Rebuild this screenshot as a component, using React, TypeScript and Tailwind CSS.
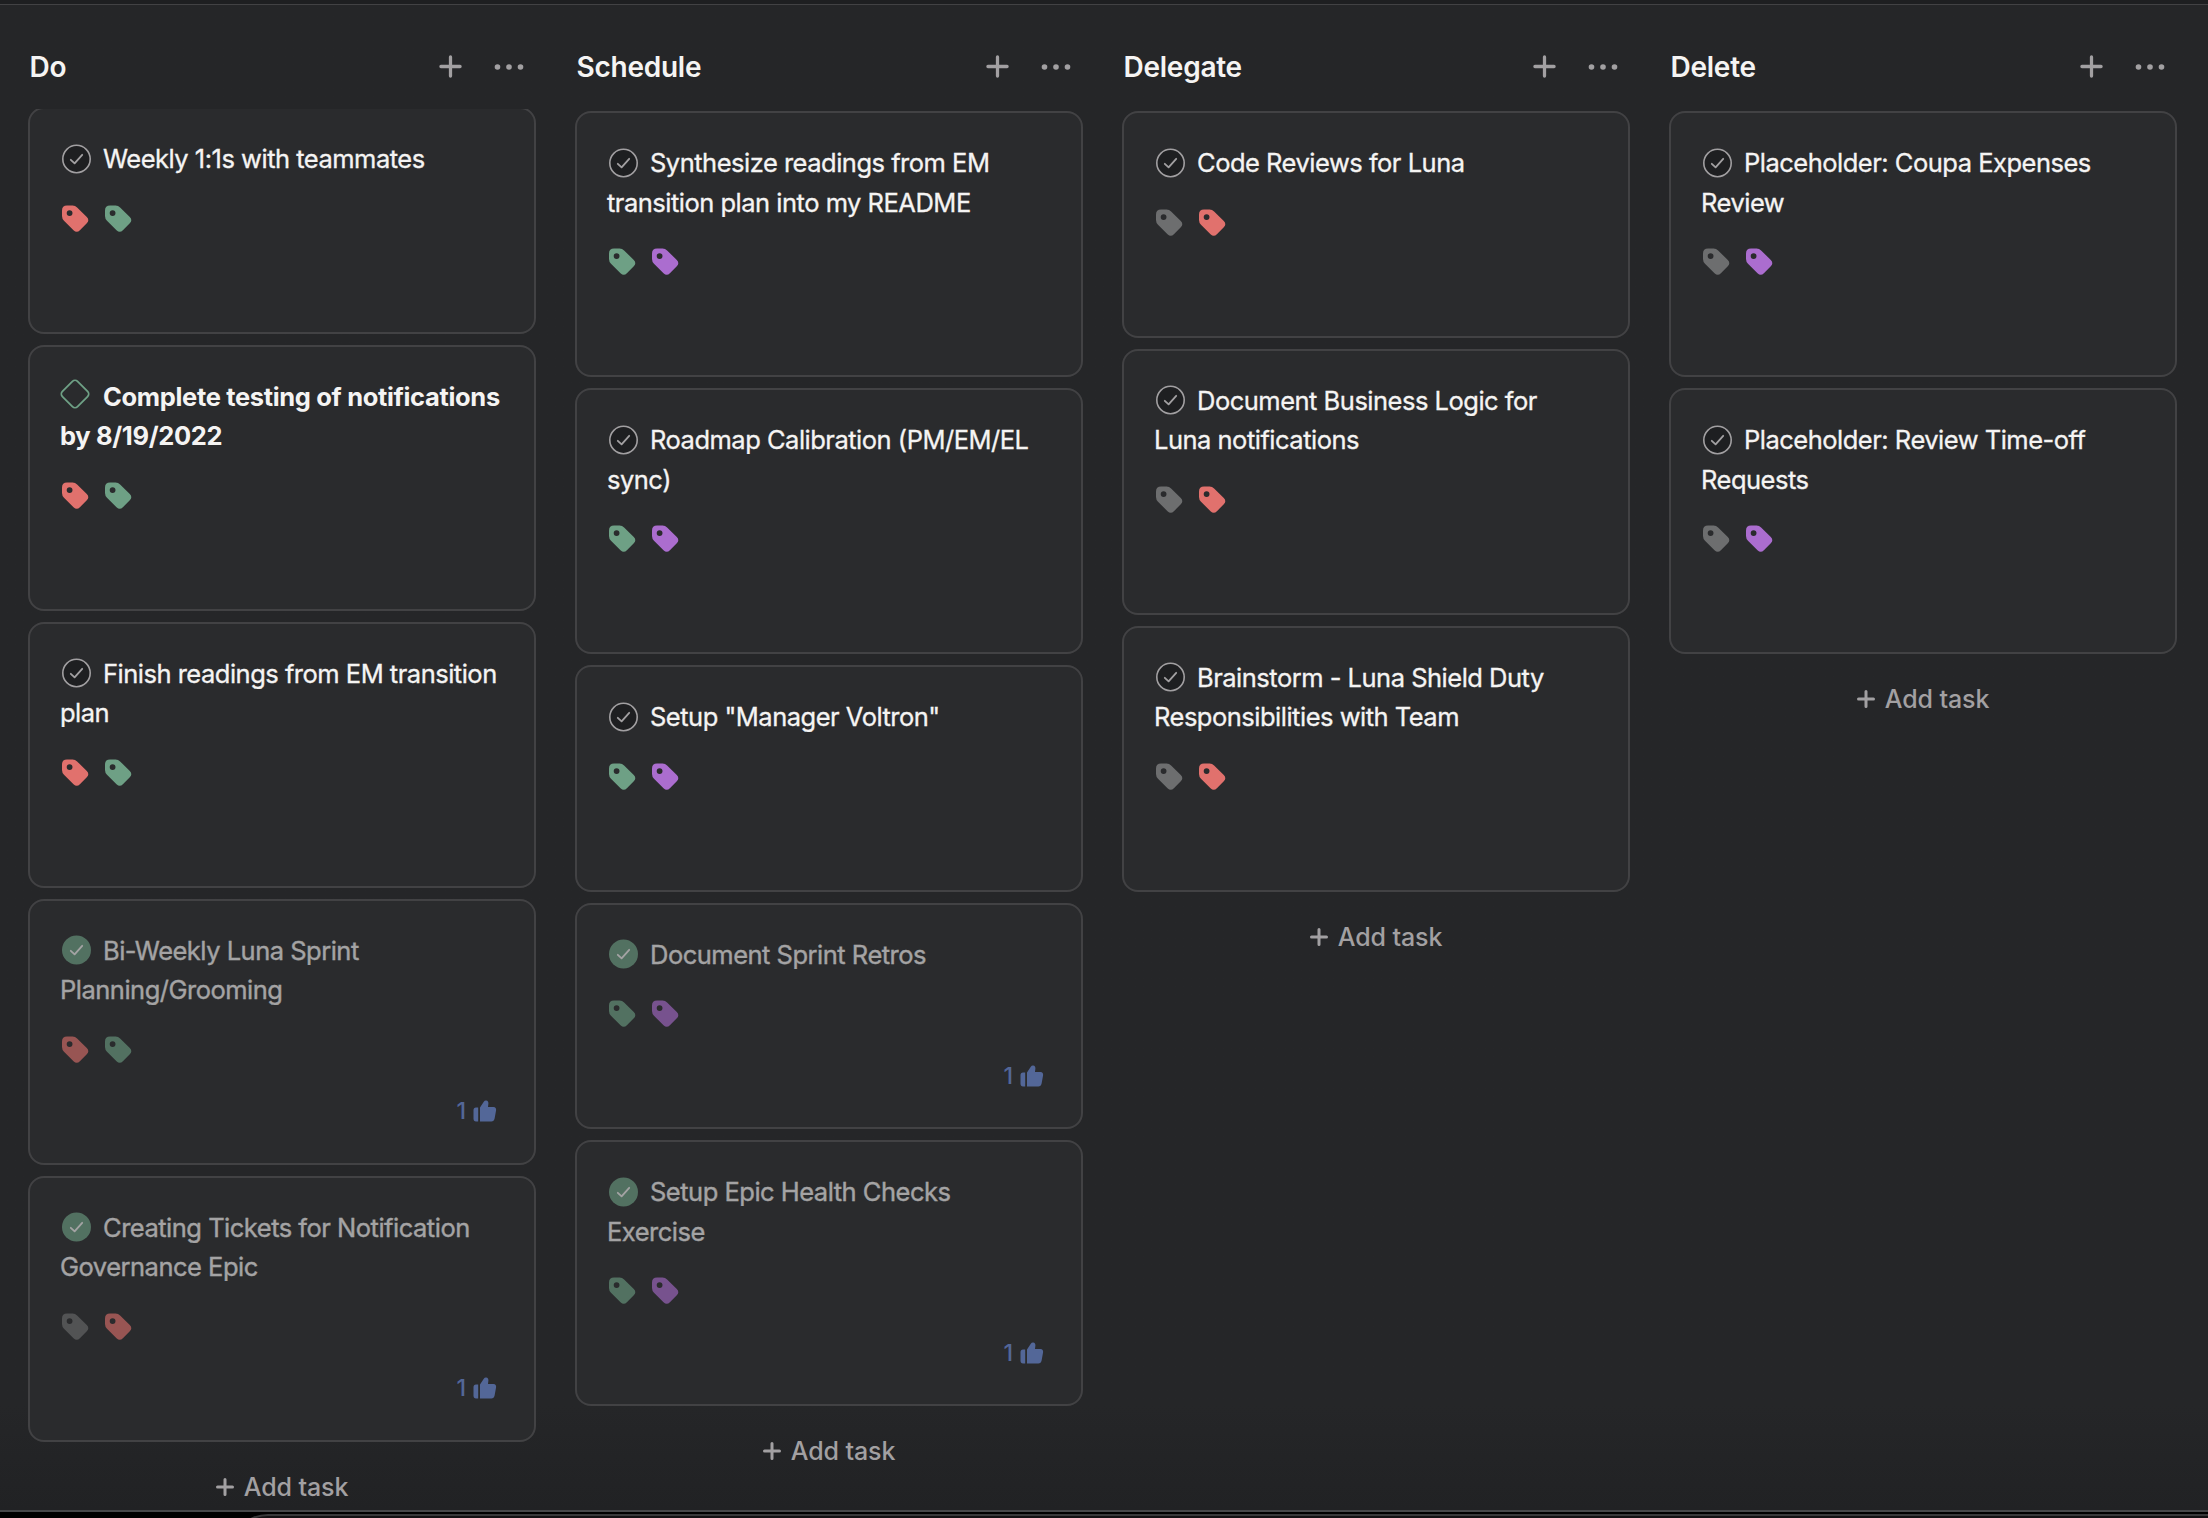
import React from "react";

type TagColor = "red" | "green" | "purple" | "gray";

interface Task {
  lines: string[];
  tags: TagColor[];
  state?: "done" | "milestone";
}

interface Column {
  title: string;
  tasks: Task[];
  scrolled?: boolean;
}

const columns: Column[] = [
  {
    title: "Do",
    scrolled: true,
    tasks: [
      { lines: ["Weekly 1:1s with teammates"], tags: ["red", "green"] },
      { lines: ["Complete testing of notifications", "by 8/19/2022"], tags: ["red", "green"], state: "milestone" },
      { lines: ["Finish readings from EM transition", "plan"], tags: ["red", "green"] },
      { lines: ["Bi-Weekly Luna Sprint", "Planning/Grooming"], tags: ["red", "green"], state: "done" },
      { lines: ["Creating Tickets for Notification", "Governance Epic"], tags: ["gray", "red"], state: "done" },
    ],
  },
  {
    title: "Schedule",
    tasks: [
      { lines: ["Synthesize readings from EM", "transition plan into my README"], tags: ["green", "purple"] },
      { lines: ["Roadmap Calibration (PM/EM/EL", "sync)"], tags: ["green", "purple"] },
      { lines: ['Setup "Manager Voltron"'], tags: ["green", "purple"] },
      { lines: ["Document Sprint Retros"], tags: ["green", "purple"], state: "done" },
      { lines: ["Setup Epic Health Checks", "Exercise"], tags: ["green", "purple"], state: "done" },
    ],
  },
  {
    title: "Delegate",
    tasks: [
      { lines: ["Code Reviews for Luna"], tags: ["gray", "red"] },
      { lines: ["Document Business Logic for", "Luna notifications"], tags: ["gray", "red"] },
      { lines: ["Brainstorm - Luna Shield Duty", "Responsibilities with Team"], tags: ["gray", "red"] },
    ],
  },
  {
    title: "Delete",
    tasks: [
      { lines: ["Placeholder: Coupa Expenses", "Review"], tags: ["gray", "purple"] },
      { lines: ["Placeholder: Review Time-off", "Requests"], tags: ["gray", "purple"] },
    ],
  },
];

const tagClass: Record<TagColor, string> = {
  red: "text-[#e1716d]",
  green: "text-[#6ea085]",
  purple: "text-[#ab6dcf]",
  gray: "text-[#6d6e6f]",
};

function Tag({ color }: { color: TagColor }) {
  return (
    <svg width="28" height="28" viewBox="0 0 28 28" className={tagClass[color]}>
      <path
        fill="currentColor"
        fillRule="evenodd"
        d="M6 .6H11.6Q14.2 .6 16.1 2.4L25.8 12Q28.8 15.2 25.8 18.3L18.9 25.2Q15.8 28.4 12.5 25.2L3 15.8Q1 13.8 1 11V5.6Q1 .6 6 .6ZM8.6 5.2A2.9 2.9 0 1 0 8.6 11A2.9 2.9 0 1 0 8.6 5.2Z"
      />
    </svg>
  );
}

function StatusIcon({ state }: { state?: Task["state"] }) {
  if (state === "milestone") {
    return (
      <svg width="30" height="30" viewBox="0 0 30 30" className="mr-[13.5px] -mt-1 -ml-[0.5px] shrink-0">
        <rect x="4.3" y="4.3" width="21.4" height="21.4" rx="3.6" transform="rotate(45 15 15)" fill="none" stroke="#6ea085" strokeWidth="1.8" />
      </svg>
    );
  }
  const done = state === "done";
  return (
    <svg width="30" height="30" viewBox="0 0 30 30" className="mr-[11px] ml-0.5 shrink-0">
      <circle
        cx="14.5"
        cy="15"
        r={done ? 14.5 : 13.7}
        fill={done ? "#6ea085" : "#1e1f21"}
        stroke={done ? "none" : "#a2a0a2"}
        strokeWidth="1.6"
      />
      <path d="M8.8 15.8L12.6 19.4L20.2 10.8" fill="none" stroke={done ? "#f5f4f3" : "#a2a0a2"} strokeWidth="1.8" strokeLinecap="round" strokeLinejoin="round" />
    </svg>
  );
}

function Likes() {
  return (
    <div className="mt-auto mr-[7px] flex items-center justify-end gap-[7px] text-[23px] leading-[26px] font-medium text-[#6f8fe0]">
      <span>1</span>
      <svg width="24" height="22" viewBox="0 0 24 22" fill="currentColor">
        <path d="M5.2 7.5H3Q0.5 7.5 0.5 10V18.5Q0.5 21.5 3 21.5H5.2Z" />
        <path d="M7 7.5L10.8 1.8Q11.6 .2 13.2 .4Q15.6 .8 15.4 3.6L15 7H20.5Q23.4 7.4 23.1 10.2L21.6 18.6Q21 21.5 18.3 21.5H7Z" />
      </svg>
    </div>
  );
}

function Card({ task }: { task: Task }) {
  const done = task.state === "done";
  const bold = task.state === "milestone";
  return (
    <article
      className={`flex shrink-0 flex-col rounded-2xl border-2 border-[#424244] bg-[#2a2b2d] px-[30px] pt-[30px] pb-[38.5px] ${
        task.lines.length > 1 ? "h-[266px]" : "h-[226.5px]"
      }`}
    >
      <div className={`flex flex-1 flex-col ${done ? "opacity-60" : ""}`}>
        <div
          className={`text-[25.5px] leading-[39.7px] whitespace-nowrap ${
            bold ? "font-bold tracking-[-0.34px]" : "font-normal tracking-[-0.5px] [-webkit-text-stroke:0.3px_currentColor]"
          }`}
        >
          <div className="flex h-[39.7px] items-center">
            <StatusIcon state={task.state} />
            <span>{task.lines[0]}</span>
          </div>
          {task.lines[1] && <div>{task.lines[1]}</div>}
        </div>
        <div className="mt-[26px] ml-px flex gap-[15px]">
          {task.tags.map((t) => (
            <Tag key={t} color={t} />
          ))}
        </div>
        {done && <Likes />}
      </div>
    </article>
  );
}

function Plus({ size, stroke }: { size: number; stroke: number }) {
  return (
    <svg width={size} height={size} viewBox="0 0 24 24" fill="none" stroke="currentColor" strokeWidth={stroke} strokeLinecap="round">
      <path d="M12 2V22M2 12H22" />
    </svg>
  );
}

function BoardColumn({ column }: { column: Column }) {
  return (
    <section className="flex w-[508px] shrink-0 flex-col">
      <header className="flex h-[104px] shrink-0 items-center pt-[19px] pl-[1.5px] text-[#a2a0a2]">
        <h2 className="flex-1 text-[28px] leading-9 font-semibold tracking-[-0.25px] text-[#f5f4f3]">{column.title}</h2>
        <Plus size={23} stroke={3.4} />
        <svg width="30" height="8" viewBox="0 0 30 8" fill="currentColor" className="mr-[12.5px] ml-[31.5px]">
          <circle cx="3.5" cy="4" r="2.8" />
          <circle cx="15" cy="4" r="2.8" />
          <circle cx="26.5" cy="4" r="2.8" />
        </svg>
      </header>
      <div className={`flex min-h-0 flex-1 flex-col overflow-hidden ${column.scrolled ? "" : "pt-0.5"}`}>
        <div className={`flex flex-col gap-[11px] ${column.scrolled ? "-mt-0.5" : ""}`}>
          {column.tasks.map((t) => (
            <Card key={t.lines[0]} task={t} />
          ))}
        </div>
        <button className="mt-[27px] flex items-center justify-center gap-2.5 text-[25px] leading-9 font-medium tracking-[-0.1px] text-[#a2a0a2]">
          <Plus size={18} stroke={4} />
          Add task
        </button>
      </div>
    </section>
  );
}

export default function App() {
  return (
    <div className="flex h-[1518px] w-[2208px] flex-col overflow-hidden bg-black font-['Inter',sans-serif] text-[#f5f4f3]">
      <div className="h-[5px] shrink-0 border-b border-[#424244] bg-[#1e1f21]" />
      <main className="flex h-[1507px] shrink-0 gap-[39px] overflow-hidden border-b-2 border-[#47484a] bg-[#252628] bg-linear-to-b from-[#252628] from-93% to-[#212224] pl-7">
        {columns.map((c) => (
          <BoardColumn key={c.title} column={c} />
        ))}
      </main>
      <div className="flex h-1.5 shrink-0 overflow-hidden pt-0.5">
        <div className="ml-[228px] h-10 flex-1 rounded-tl-[40px] border-t-2 border-l-2 border-[#39393a] bg-[#131113]" />
      </div>
    </div>
  );
}
